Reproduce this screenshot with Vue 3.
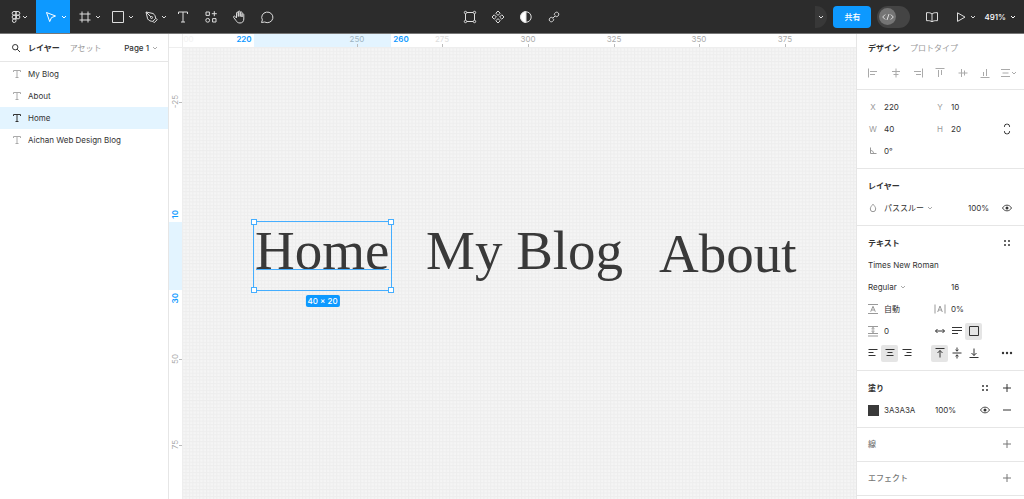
<script setup>
import { h, ref } from 'vue'

/* Each icon: [width, height, svg body] */
const icons = {
  logo: [12, 14, '<path d="M6 1.5H4a1.8 1.8 0 0 0 0 3.7h2zM6 1.5h2a1.8 1.8 0 0 1 0 3.7H6zM6 5.2H4a1.8 1.8 0 0 0 0 3.7h2zM6 8.9H4a1.8 1.8 0 1 0 2 1.8zM8 5.2a1.8 1.8 0 1 1 0 3.7a1.8 1.8 0 0 1 0-3.7zM6 5.2v3.7"/>'],
  chevron: [6, 6, '<path d="M1 2l2 2l2-2"/>'],
  move: [16, 16, '<path d="M3.5 3.5l9 3.500l-4 1.600l-1.800 4z"/>'],
  frame: [16, 16, '<path d="M5 2.5v11M11 2.5v11M2.5 5h11M2.5 11h11"/>'],
  rect: [16, 16, '<path d="M2.5 2.5h11v11h-11z"/>'],
  pen: [16, 16, '<path d="M3 3l7 1.5c2 1.2 2.5 3 2.6 5l-2.8 2.8c-2 0-4-.5-5.2-2.5zM3 3l5 5M12.8 9.2l1.4 1.5l-3 3l-1.5-1.5"/><circle cx="8.6" cy="8.5" r="1"/>'],
  text: [16, 16, '<path d="M3.5 5V3h9v2M8 3v10M6 13h4"/>'],
  parts: [16, 16, '<path d="M3 3h3.4v3.4H3zM9.6 9.6H13V13H9.6zM11.3 2.2v5M8.8 4.7h5"/><circle cx="4.7" cy="11.3" r="1.9"/>'],
  hand: [16, 16, '<path d="M5.5 9V4.1c0-1.3 1.8-1.3 1.8 0V7.5V3c0-1.3 1.9-1.3 1.9 0v4.5V3.7c0-1.3 1.8-1.3 1.8 0V8V5.6c0-1.2 1.8-1.2 1.8 0V10c0 2.4-1.4 4-3.8 4c-2 0-3-.8-4-2.4L2.6 8.4c-.5-1.2.9-1.8 1.6-.9z"/>'],
  comment: [16, 16, '<path d="M2.500 13.500l.9-2.600a5.600 5.300 0 1 1 2.200 2.100z"/>'],
  mask: [14, 14, '<path d="M3.500 2.500h7M3.500 11.500h7M2.500 3.500v7M11.500 3.500v7"/><g fill="#2c2c2c"><circle cx="2.500" cy="2.500" r="1.200"/><circle cx="11.500" cy="2.500" r="1.200"/><circle cx="2.500" cy="11.500" r="1.200"/><circle cx="11.500" cy="11.500" r="1.200"/></g>'],
  component: [14, 14, '<path d="M7 1l2.200 2.200L7 5.400L4.800 3.200zM7 8.600l2.200 2.200L7 13l-2.200-2.200zM3.200 4.800L5.400 7L3.200 9.200L1 7zM10.800 4.800L13 7l-2.200 2.200L8.600 7z"/>'],
  contrast: [14, 14, '<circle cx="7" cy="7" r="5.200"/><path d="M7 1.500a5.500 5.500 0 0 0 0 11z" fill="#fff"/>'],
  link: [14, 14, '<path d="M7.400 5.200c-.4-1.200.6-2.800 2.100-3c1.500-.1 2.600 1.300 2.200 2.700c-.4 1.500-2.200 2.200-3.300 1.500M6.600 8.800c.4 1.200-.6 2.800-2.100 3c-1.500.1-2.600-1.300-2.200-2.700c.4-1.500 2.200-2.200 3.300-1.500M5.600 8.500l2.800-3"/>'],
  code: [14, 14, '<path d="M4.200 4.500L1.700 7l2.500 2.500M9.800 4.500L12.300 7l-2.500 2.500M8 4L6 10"/>'],
  book: [14, 14, '<path d="M7 4C5.800 2.800 4 2.500 1.500 2.700v8c2.500-.2 4.300.1 5.500 1.100c1.200-1 3-1.300 5.500-1.100v-8C10 2.500 8.200 2.800 7 4zM7 4v7.800"/>'],
  play: [12, 12, '<path d="M2.500 1.800v8.600L10 6.100z"/>'],
  search: [10, 10, '<circle cx="4.200" cy="4.200" r="2.700"/><path d="M6.200 6.200L9 9"/>'],
  layerText: [10, 10, '<path d="M1.500 3V1.500h7V3M5 1.500v7M3.500 8.500h3"/>'],
  alLeft: [12, 12, '<path d="M1.500 1.500v9M3 4.500h7M3 7.500h5"/>'],
  alCenter: [12, 12, '<path d="M6 1.500v9M2 4.500h8M3.500 7.500h5"/>'],
  alRight: [12, 12, '<path d="M10.500 1.500v9M2 4.500h7M4 7.500h5"/>'],
  alTop: [12, 12, '<path d="M1.500 1.500h9M4.500 3v7M7.500 3v5"/>'],
  alMiddle: [12, 12, '<path d="M1.500 6h9M4.500 2v8M7.500 3.500v5"/>'],
  alBottom: [12, 12, '<path d="M1.500 10.500h9M4.500 5v4M7.500 2v7"/>'],
  tidy: [16, 12, '<path d="M1 2.500h9M2.500 6h6M1 9.500h9M12 5l2 2l2-2"/>'],
  linkSize: [8, 12, '<path d="M1.500 4V3.200a2 2 0 0 1 2-2h1a2 2 0 0 1 2 2V4M1.500 8v.8a2 2 0 0 0 2 2h1a2 2 0 0 0 2-2V8"/>'],
  angle: [10, 10, '<path d="M2.500 1.500v6H8.500M2.500 4.500c2 0 3 1 3 3"/>'],
  drop: [8, 10, '<path d="M4 1.200C2.500 3 1.300 4.300 1.300 6a2.700 2.700 0 0 0 5.400 0C6.700 4.300 5.500 3 4 1.200z"/>'],
  eye: [12, 10, '<path d="M1.500 5c2-3.800 7-3.800 9 0c-2 3.800-7 3.800-9 0z" stroke-width=".9"/><circle cx="6" cy="5" r="1.500" fill="currentColor" stroke="none"/>'],
  styles: [8, 8, '<g fill="currentColor" stroke="none"><circle cx="2" cy="2" r="1"/><circle cx="6" cy="2" r="1"/><circle cx="2" cy="6" r="1"/><circle cx="6" cy="6" r="1"/></g>'],
  plus: [10, 10, '<path d="M5 1v8M1 5h8"/>'],
  minus: [10, 10, '<path d="M1 5h8"/>'],
  lineHeight: [12, 12, '<path d="M1 1.500h10M1 10.500h10M3.700 8.700L6 3.300l2.300 5.400M4.500 7h3"/>'],
  spacing: [12, 12, '<path d="M1 1.500v9M11 1.500v9M3.700 9L6 3l2.300 6M4.500 7h3"/>'],
  paragraph: [12, 12, '<path d="M1 1.500h10M1 8.500h10M1 11h10M6 2.500v5M4.500 3.800L6 2.500l1.500 1.300M4.500 6.200L6 7.500l1.500-1.300"/>'],
  autoWidth: [12, 12, '<path d="M1.500 6h9M3.500 4l-2 2l2 2M8.500 4l2 2l-2 2"/>'],
  autoHeight: [12, 12, '<path d="M1 2.500h10M1 5.500h10M1 8.500h6"/>'],
  fixed: [12, 12, '<path d="M1.500 1.500h9v9h-9z"/>'],
  txLeft: [12, 12, '<path d="M1.500 2.500h9M1.500 5.500h5M1.500 8.500h7"/>'],
  txCenter: [12, 12, '<path d="M1.500 2.500h9M3.500 5.500h5M2.500 8.500h7"/>'],
  txRight: [12, 12, '<path d="M1.500 2.500h9M5.500 5.500h5M3.500 8.500h7"/>'],
  vTop: [12, 12, '<path d="M1.500 1.500h9M6 10.500V3.500M3.500 6L6 3.500L8.500 6"/>'],
  vMiddle: [12, 12, '<path d="M1.500 6h9M6 .5v3.500M4.500 2.800L6 4.200l1.500-1.400M6 11.500V8M4.500 9.200L6 7.800l1.500 1.400"/>'],
  vBottom: [12, 12, '<path d="M1.500 10.500h9M6 1.500v7M3.500 6L6 8.500L8.500 6"/>'],
  more: [12, 4, '<g fill="currentColor" stroke="none"><circle cx="2" cy="2" r="1.200"/><circle cx="6" cy="2" r="1.200"/><circle cx="10" cy="2" r="1.200"/></g>'],
}

const Icon = ({ name }) => {
  const [w, ht, body] = icons[name]
  return h('svg', {
    width: w, height: ht, viewBox: `0 0 ${w} ${ht}`, fill: 'none',
    stroke: 'currentColor', 'stroke-linejoin': 'round', 'aria-hidden': 'true', innerHTML: body,
  })
}
Icon.props = ['name']

const splitTools = [
  ['move', '移動', true], ['frame', 'フレーム'], ['rect', '長方形'], ['pen', 'ペン'],
]
const tools = [['text', 'テキスト'], ['parts', 'リソース'], ['hand', '手のひら'], ['comment', 'コメント']]
const midTools = [['mask', 'オブジェクトの編集'], ['component', 'コンポーネント'], ['contrast', 'マスク'], ['link', 'リンク']]

const layers = ['My Blog', 'About', 'Home', 'Aichan Web Design Blog']
const selected = ref('Home')
const aligns = ['alLeft', 'alCenter', 'alRight', 'alTop', 'alMiddle', 'alBottom', 'tidy']

/* Canvas units to screen pixels, measured from the canvas corner */
const scale = 3.424
const px = (v) => Math.round(85 + (v - 220) * scale) + 'px'
const py = (v) => Math.round(188 + (v - 10) * scale) + 'px'
const len = (v) => Math.round(v * scale) + 'px'
const ticksX = [[250, 'on'], [275, 'faint'], [300, ''], [325, ''], [350, ''], [375, '']]
const ticksY = [-25, 50, 75]
const texts = [['Home', 220.4, 10], ['My Blog', 270.2, 10], ['About', 338.3, 11]]

const box = ref({ x: '220', y: '10', w: '40', h: '20', r: '0°' })
</script>

<template>
  <div class="app">
    <header class="toolbar">
      <div class="group left">
        <button class="tool menu" aria-label="メニュー"><Icon name="logo" /><Icon name="chevron" /></button>
        <button v-for="t in splitTools" :key="t[0]" class="tool split" :class="{ active: t[2] }" :aria-label="t[1]">
          <Icon :name="t[0]" /><Icon name="chevron" />
        </button>
        <button v-for="t in tools" :key="t[0]" class="tool" :aria-label="t[1]"><Icon :name="t[0]" /></button>
      </div>
      <div class="group">
        <button v-for="t in midTools" :key="t[0]" class="tool" :aria-label="t[1]"><Icon :name="t[0]" /></button>
      </div>
      <div class="group right">
        <button class="people" aria-label="参加者"><Icon name="chevron" /></button>
        <button class="share">共有</button>
        <button class="dev" aria-label="開発モード"><span class="knob"><Icon name="code" /></span></button>
        <button class="tool book" aria-label="ライブラリ"><Icon name="book" /></button>
        <button class="tool play" aria-label="プレゼンテーション"><Icon name="play" /><Icon name="chevron" /></button>
        <button class="tool zoom">491%<Icon name="chevron" /></button>
      </div>
    </header>

    <main class="body">
      <aside class="layers">
        <div class="layers-head">
          <button class="search" aria-label="検索"><Icon name="search" /></button>
          <button class="strong">レイヤー</button>
          <button class="muted assets">アセット</button>
          <button class="page">Page 1 <Icon name="chevron" /></button>
        </div>
        <ul>
          <li v-for="l in layers" :key="l">
            <button class="layer" :class="{ current: l === selected }" @click="selected = l"><Icon name="layerText" />{{ l }}</button>
          </li>
        </ul>
      </aside>

      <section class="canvas">
        <span v-for="t in texts" :key="t[0]" class="artText" :style="{ left: px(t[1]), top: py(t[2]) }">{{ t[0] }}</span>
        <svg class="grid" width="100%" height="100%" aria-hidden="true">
          <defs>
            <pattern id="unit" x="85" y="188" :width="scale" :height="scale" patternUnits="userSpaceOnUse">
              <path d="M0 .5H4M.5 0V4" stroke="#000" stroke-opacity=".03" />
            </pattern>
          </defs>
          <rect width="100%" height="100%" fill="url(#unit)" />
        </svg>

        <div class="selection" :style="{ left: px(220), top: py(10), width: len(40), height: len(20) }">
          <span class="baseline" />
          <i class="nw" /><i class="ne" /><i class="sw" /><i class="se" />
          <span class="size">40 × 20</span>
        </div>

        <div class="ruler top">
          <span class="range" :style="{ left: px(220), width: len(40) }" />
          <span class="mark ghost" :style="{ left: px(200) }">200</span>
          <span v-for="t in ticksX" :key="t[0]" class="mark tick" :class="t[1]" :style="{ left: px(t[0]) }">{{ t[0] }}</span>
          <span class="mark blue" :style="{ left: px(217) }">220</span>
          <span class="mark blue" :style="{ left: px(263) }">260</span>
        </div>
        <div class="ruler side">
          <span class="range" :style="{ top: py(10), height: len(20) }" />
          <span v-for="t in ticksY" :key="t" class="mark tick" :style="{ top: py(t) }"><b>{{ t }}</b></span>
          <span class="mark blue" :style="{ top: py(7.8) }"><b>10</b></span>
          <span class="mark blue" :style="{ top: py(32.2) }"><b>30</b></span>
        </div>
        <div class="corner" />
      </section>

      <aside class="props">
        <div class="tabs">
          <button class="strong">デザイン</button>
          <button class="muted">プロトタイプ</button>
        </div>
        <div class="aligns">
          <button v-for="a in aligns" :key="a" :aria-label="a"><Icon :name="a" /></button>
        </div>

        <section>
          <div class="row">
            <label for="px">X</label><input id="px" v-model="box.x">
            <label for="py">Y</label><input id="py" v-model="box.y">
          </div>
          <div class="row">
            <label for="pw">W</label><input id="pw" v-model="box.w">
            <label for="ph">H</label><input id="ph" v-model="box.h">
            <button aria-label="縦横比を固定"><Icon name="linkSize" /></button>
          </div>
          <div class="row">
            <label for="pr" aria-label="回転"><Icon name="angle" /></label><input id="pr" v-model="box.r">
          </div>
        </section>

        <section>
          <h2>レイヤー</h2>
          <div class="row blend">
            <label for="blend" aria-label="ブレンド"><Icon name="drop" /></label>
            <span class="pick"><select id="blend"><option>パススルー</option></select><Icon name="chevron" /></span>
            <input value="100%" aria-label="不透明度">
            <button aria-label="表示"><Icon name="eye" /></button>
          </div>
        </section>

        <section>
          <h2>テキスト<button aria-label="スタイル"><Icon name="styles" /></button></h2>
          <div class="row full"><input value="Times New Roman" aria-label="フォント"></div>
          <div class="row font">
            <span class="pick"><select aria-label="ウェイト"><option>Regular</option></select><Icon name="chevron" /></span>
            <input value="16" aria-label="サイズ">
          </div>
          <div class="row">
            <label for="lh" aria-label="行の高さ"><Icon name="lineHeight" /></label><input id="lh" value="自動">
            <label for="ls" aria-label="文字間隔"><Icon name="spacing" /></label><input id="ls" value="0%">
          </div>
          <div class="row">
            <label for="ps" aria-label="段落間隔"><Icon name="paragraph" /></label><input id="ps" value="0">
            <div class="set">
              <button aria-label="幅の自動調整"><Icon name="autoWidth" /></button>
              <button aria-label="高さの自動調整"><Icon name="autoHeight" /></button>
              <button class="on" aria-label="固定サイズ"><Icon name="fixed" /></button>
            </div>
          </div>
          <div class="row">
            <div class="set first">
              <button aria-label="左揃え"><Icon name="txLeft" /></button>
              <button class="on" aria-label="中央揃え"><Icon name="txCenter" /></button>
              <button aria-label="右揃え"><Icon name="txRight" /></button>
            </div>
            <div class="set">
              <button class="on" aria-label="上揃え"><Icon name="vTop" /></button>
              <button aria-label="上下中央揃え"><Icon name="vMiddle" /></button>
              <button aria-label="下揃え"><Icon name="vBottom" /></button>
            </div>
            <button aria-label="その他"><Icon name="more" /></button>
          </div>
        </section>

        <section>
          <h2>塗り<button aria-label="スタイル"><Icon name="styles" /></button><button aria-label="追加"><Icon name="plus" /></button></h2>
          <div class="row fill">
            <button class="swatch" aria-label="色" />
            <input value="3A3A3A" aria-label="カラーコード">
            <input value="100%" aria-label="塗りの不透明度">
            <button aria-label="塗りの表示"><Icon name="eye" /></button>
            <button aria-label="削除"><Icon name="minus" /></button>
          </div>
        </section>
        <section class="closed"><h2>線<button aria-label="追加"><Icon name="plus" /></button></h2></section>
        <section class="closed"><h2>エフェクト<button aria-label="追加"><Icon name="plus" /></button></h2></section>
        <section class="closed" />
      </aside>
    </main>
  </div>
</template>

<style>
html, body { height: 100%; overflow: hidden; }
</style>

<style scoped>
.app {
  display: flex;
  flex-direction: column;
  height: 100vh;
  font: 8px/12px Inter, "Noto Sans CJK JP", sans-serif;
  color: #333;
  background: #fff;
}
button, input, select {
  margin: 0;
  padding: 0;
  border: 0;
  background: none;
  font: inherit;
  color: inherit;
  min-width: 0;
}
button { display: flex; align-items: center; justify-content: center; white-space: nowrap; }
input { width: 100%; }
svg { display: block; flex: none; }
.strong { font-weight: 700; }
.muted { color: #999; }

.toolbar {
  display: flex;
  flex: none;
  height: 33px;
  border-bottom: 1px solid #777;
  background: #2c2c2c;
  color: #ddd;
}
.group { display: flex; align-items: center; }
.left, .right { flex: 1; }
.right { justify-content: flex-end; }
.tool { width: 28px; height: 33px; flex: none; }
.menu { width: 36px; justify-content: flex-start; padding-left: 10px; }
.split { width: 33px; justify-content: flex-start; padding-left: 7px; gap: 2px; }
.active { width: 34px; background: #0d99ff; color: #fff; }
.people {
  width: 12px;
  height: 22px;
  border-radius: 0 11px 11px 0;
  background: #383838;
  margin-right: 6px;
}
.share {
  width: 38px;
  height: 22px;
  border-radius: 4px;
  background: #0d99ff;
  color: #fff;
  font-weight: 500;
  margin-right: 6px;
}
.dev {
  width: 33px;
  height: 22px;
  border-radius: 11px;
  background: #444;
  justify-content: flex-start;
  padding-left: 2px;
  margin-right: 8px;
}
.knob {
  display: grid;
  place-items: center;
  width: 17px;
  height: 17px;
  border-radius: 50%;
  background: #757575;
}
.book { margin-right: 8px; }
.play { width: 22px; margin-right: 8px; gap: 3px; }
.zoom { width: auto; gap: 4px; margin-right: 8px; color: #fff; font-weight: 500; }

.body { display: flex; flex: 1; min-height: 0; }
.layers { flex: none; width: 168px; border-right: 1px solid #e6e6e6; }
.layers-head {
  display: flex;
  align-items: center;
  height: 27px;
  padding: 0 10px 0 11px;
  border-bottom: 1px solid #e6e6e6;
}
.search { margin-right: 7px; }
.assets { margin-left: 10px; }
.page { margin-left: auto; gap: 3px; font-weight: 500; }
.page svg { color: #aaa; }
ul { list-style: none; margin: 0; padding: 1px 0; }
.layer {
  width: 100%;
  height: 22px;
  justify-content: flex-start;
  gap: 6px;
  padding-left: 12px;
}
.layer svg { color: #aaa; }
.layer.current { background: #e3f4ff; }
.layer.current svg { color: #333; }

.canvas { position: relative; flex: 1; overflow: hidden; background: #f5f5f5; }
.grid { position: absolute; inset: 0; }
.artText {
  position: absolute;
  font: 55px/57px "Liberation Serif", "Times New Roman", serif;
  color: #3a3a3a;
  white-space: nowrap;
}
.selection { position: absolute; outline: 1px solid #45aeff; }
.selection i {
  position: absolute;
  width: 4px;
  height: 4px;
  border: 1px solid #45aeff;
  background: #fff;
}
.nw, .sw { left: -3px; }
.ne, .se { right: -3px; }
.nw, .ne { top: -3px; }
.sw, .se { bottom: -3px; }
.baseline { position: absolute; left: 2px; right: 2px; bottom: 20px; height: 1px; background: #45aeff; }
.size {
  position: absolute;
  top: 100%;
  left: 50%;
  transform: translateX(-50%);
  margin-top: 5px;
  padding: 0 2px;
  border-radius: 2px;
  background: #0d99ff;
  color: #fff;
  font-weight: 500;
  white-space: nowrap;
}

.ruler { position: absolute; background: #fff; overflow: hidden; color: #aaa; }
.top { top: 0; left: 0; right: 0; height: 13px; border-bottom: 1px solid #eee; }
.side { top: 0; bottom: 0; left: 0; width: 13px; border-right: 1px solid #eee; }
.range { position: absolute; background: #e3f4ff; }
.top .range { top: 0; bottom: 0; }
.side .range { left: 0; right: 0; }
.mark { position: absolute; display: flex; align-items: center; justify-content: center; }
.top .mark { top: 0; width: 24px; height: 10px; line-height: 10px; margin-left: -12px; }
.top .tick::after { left: 12px; top: 10px; width: 1px; height: 3px; }
.side .mark { left: 0; width: 11px; height: 24px; margin-top: -12px; }
.side .tick::after { top: 12px; left: 10px; height: 1px; width: 3px; }
.side b { font-weight: inherit; line-height: 10px; writing-mode: vertical-rl; transform: rotate(180deg); }
.tick::after { content: ""; position: absolute; background: #bbb; }
.on.mark { color: #9fb4c2; }
.faint { color: #ddd; }
.ghost { color: #f2f2f2; }
.blue { color: #0d99ff; font-weight: 600; }
.corner {
  position: absolute;
  top: 0;
  left: 0;
  width: 13px;
  height: 13px;
  background: #fff;
  border: solid #eee;
  border-width: 0 1px 1px 0;
}

.props { flex: none; width: 167px; border-left: 1px solid #e6e6e6; overflow: hidden; }
.tabs { display: flex; gap: 10px; height: 27px; padding-left: 11px; }
.aligns {
  display: grid;
  grid-template-columns: repeat(7, 1fr);
  height: 28px;
  padding: 0 5px 4px;
  box-sizing: border-box;
  color: #aaa;
}
.props section { border-top: 1px solid #e6e6e6; padding: 6px 6px 6px 5px; }
.props .closed { padding-top: 5px; }
h2 {
  display: flex;
  align-items: center;
  height: 22px;
  margin: 0;
  padding-left: 6px;
  font-size: 8px;
  font-weight: 700;
}
h2 button { width: 22px; height: 22px; }
h2 button:first-of-type { margin-left: auto; }
.closed h2 { font-weight: 500; color: #777; }
.row {
  display: grid;
  grid-template-columns: 22px 45px 22px 1fr 22px;
  align-items: center;
  height: 22px;
}
.row label { display: grid; place-items: center; color: #999; }
.row > button:last-child { height: 22px; grid-column-end: -1; }
.blend { grid-template-columns: 22px 1fr 28px 22px; }
.full { display: block; padding-left: 6px; }
.full input { height: 22px; }
.font { grid-template-columns: 83px 1fr; padding-left: 6px; }
.fill { grid-template-columns: 22px 51px 1fr 22px 22px; }
.pick { display: flex; align-items: center; gap: 3px; }
.pick svg { color: #aaa; }
select { appearance: none; }
.set { display: flex; grid-column: 3 / 5; padding-left: 2px; }
.set.first { grid-column: 1 / 3; }
.set button { width: 17px; height: 17px; border-radius: 2px; }
.set .on { background: #e5e5e5; }
.swatch { width: 11px; height: 11px; margin-left: 6px; background: #3a3a3a; }
</style>
